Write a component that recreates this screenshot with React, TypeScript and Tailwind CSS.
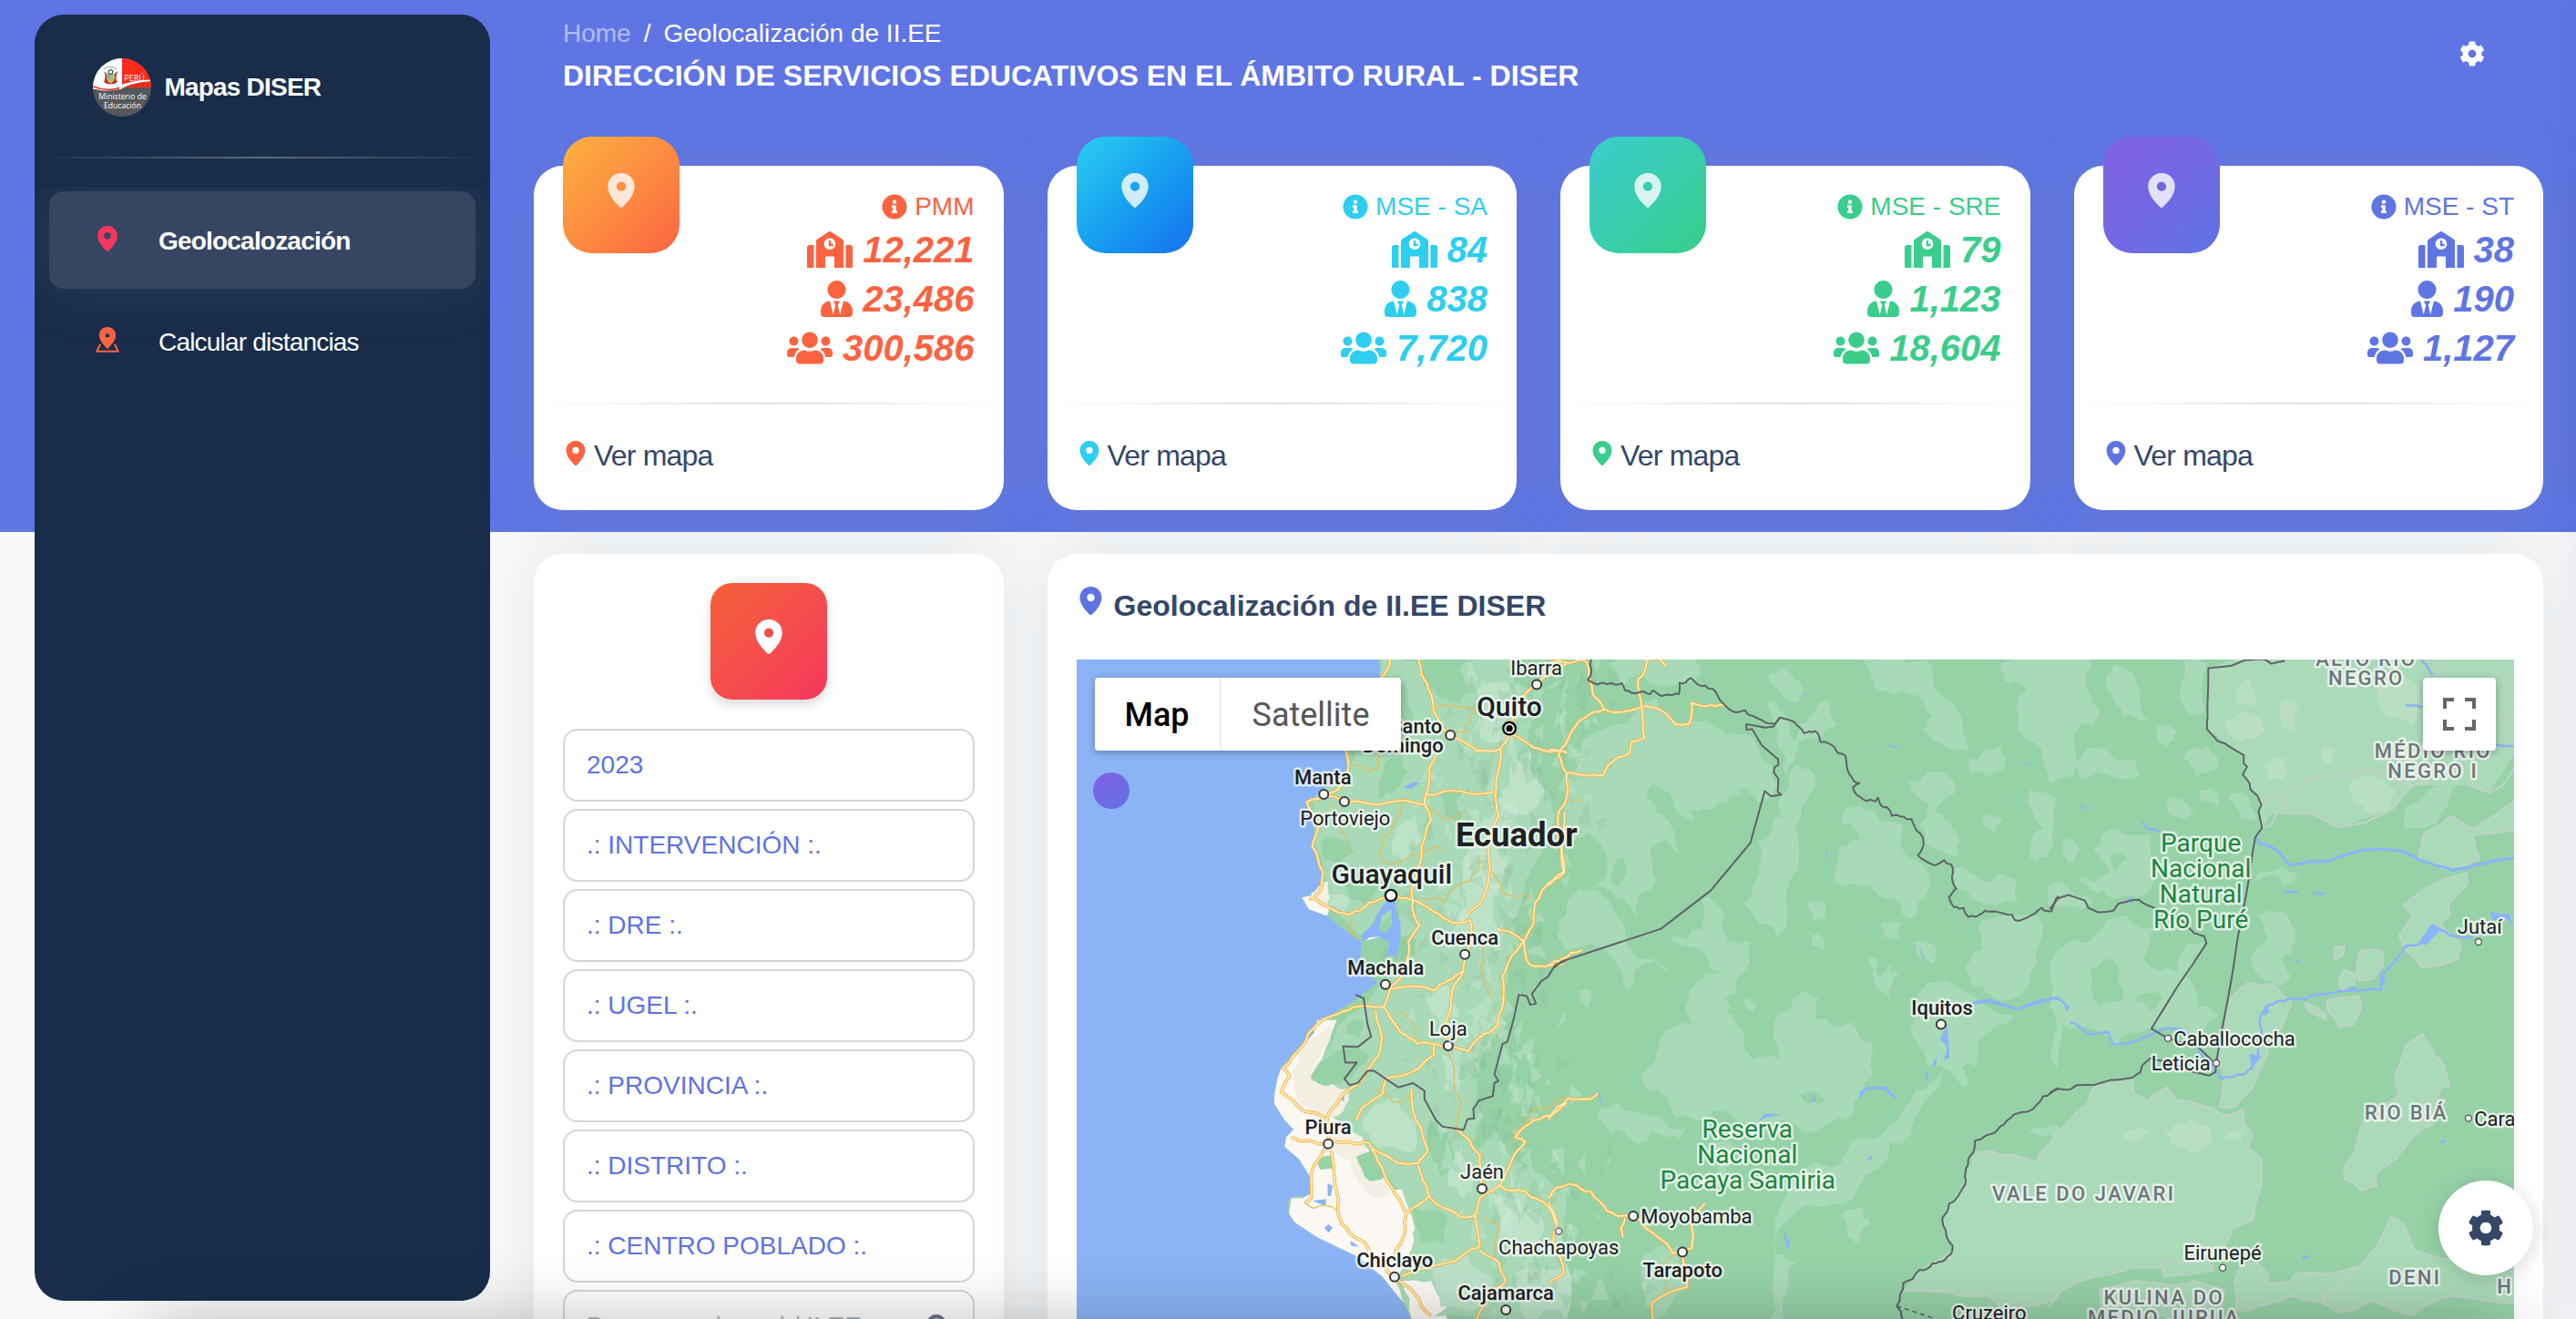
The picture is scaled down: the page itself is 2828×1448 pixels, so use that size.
import React from "react";
import { FaSchool, FaUserTie, FaUsers, FaInfoCircle, FaCog, FaSearch } from "react-icons/fa";

/* ---------- icons ---------- */

function Pin({ className }: { className?: string }) {
  return (
    <svg viewBox="0 0 24 31" fill="currentColor" className={className}>
      <path
        fillRule="evenodd"
        d="M12 0C5.3 0 0 5.2 0 11.9c0 7.6 6.3 14.3 10.7 18.5.8.8 1.8.8 2.6 0C17.700 26.200 24 19.500 24 11.900 24 5.200 18.700 0 12 0zm0 16.200a4.200 4.200 0 1 1 0-8.400 4.200 4.200 0 0 1 0 8.400z"
      />
    </svg>
  );
}

function RoutePin({ className }: { className?: string }) {
  return (
    <svg viewBox="0 0 28 30" className={className}>
      <path
        fill="currentColor"
        fillRule="evenodd"
        d="M14 0C8.700 0 4.200 4 4.200 9.400c0 6.200 5 11.400 8.500 15.300.8.800 1.800.8 2.600 0 3.500-3.900 8.500-9.100 8.500-15.300C23.800 4 19.300 0 14 0zm0 12.400a2.400 2.400 0 1 1 0-4.800 2.400 2.400 0 0 1 0 4.800z"
      />
      <path
        d="M5.200 21 1.400 28.800h25.200L22.800 21"
        fill="none"
        stroke="currentColor"
        strokeWidth="2.200"
        strokeLinecap="round"
        strokeLinejoin="round"
      />
    </svg>
  );
}

function Crest() {
  return (
    <svg viewBox="0 0 64 64" className="size-16 shrink-0">
      <defs>
        <clipPath id="crest">
          <circle cx="32" cy="32" r="32" />
        </clipPath>
      </defs>
      <g clipPath="url(#crest)">
        <rect width="64" height="64" fill="#55585a" />
        <rect width="32" height="34" fill="#fff" />
        <rect x="32" width="32" height="32" fill="#fb2a1c" />
        <path d="M0 28c10 5 20 5.500 30 1.500S50 24 64 23.500V25c-12 1-22 3-30 7s-22 5-34 1z" fill="#fff" />
        <path d="M0 31c10 4 20 4.500 29 1.500" fill="none" stroke="#fb2a1c" strokeWidth="1.400" />
        <path d="M12 11.500q7-4 14 0" fill="none" stroke="#999" strokeWidth="1" />
        <path d="M11 14q3 2 2.500 6T12 26q3 2.500 7.500 2.500T27 26q-2-2-1.500-6t2.500-6q-3 1-4.500 3.500h-8Q14 15 11 14z" fill="#b5332a" />
        <path d="M15 17.500h9v5q-1.500 4-4.500 5-3-1-4.500-5z" fill="#c9b46a" />
        <path d="M15.500 18h4v4.500h-4z" fill="#7fb3b8" />
        <circle cx="19.500" cy="15" r="2.400" fill="none" stroke="#39724d" strokeWidth="1.300" />
        <text x="45.500" y="24.800" fontSize="9" fill="#fff" textAnchor="middle" className="font-['Open_Sans',sans-serif]">PERÚ</text>
        <text x="32.500" y="45.200" fontSize="8.600" fill="#fff" textAnchor="middle" className="font-['Open_Sans',sans-serif]">Ministerio de</text>
        <text x="32.500" y="54.600" fontSize="8.600" fill="#fff" textAnchor="middle" className="font-['Open_Sans',sans-serif]">Educación</text>
      </g>
    </svg>
  );
}

/* ---------- sidebar ---------- */

function Sidebar() {
  return (
    <aside className="mt-4 ml-[38px] flex h-[1412px] w-[500px] shrink-0 flex-col overflow-hidden rounded-[32px] bg-[#192d4b]">
      <div className="flex h-[156px] items-center pl-16 pt-4 pb-3">
        <Crest />
        <span className="ml-[14.500px] text-[28px] leading-10 font-bold tracking-[-0.8px] text-white">Mapas DISER</span>
      </div>
      <div className="h-0.5 bg-[linear-gradient(90deg,transparent,rgba(255,255,255,.3),transparent)]" />
      <nav className="mt-8 flex-1 overflow-hidden px-4 pt-1 text-[28px] tracking-[-0.8px] text-white">
        <a className="flex h-[107px] items-center rounded-2xl bg-[#364662] pl-[53px] font-bold shadow-[0_0_64px_rgba(136,152,170,.15)]">
          <Pin className="-mt-1 h-7 w-[22px] text-[#f5365c]" />
          <span className="ml-[45px] pt-0.5">Geolocalozación</span>
        </a>
        <a className="mt-1 flex h-[107px] items-center pl-[51px]">
          <RoutePin className="-mt-1 h-7 w-[26px] text-[#fb6340]" />
          <span className="ml-[43px] pt-0.5">Calcular distancias</span>
        </a>
      </nav>
    </aside>
  );
}

/* ---------- summary cards ---------- */

type Card = { name: string; text: string; box: string; schools: string; teachers: string; students: string };

const cards: Card[] = [
  { name: "PMM", text: "text-[#fb6340]", box: "from-[#fbb140] to-[#fb6340]", schools: "12,221", teachers: "23,486", students: "300,586" },
  { name: "MSE - SA", text: "text-[#2dceef]", box: "from-[#2dceef] to-[#1a6fee]", schools: "84", teachers: "838", students: "7,720" },
  { name: "MSE - SRE", text: "text-[#3acd8b]", box: "from-[#3acdcd] to-[#3acd8b]", schools: "79", teachers: "1,123", students: "18,604" },
  { name: "MSE - ST", text: "text-[#5f75e3]", box: "from-[#825ee4] to-[#5e72e4]", schools: "38", teachers: "190", students: "1,127" },
];

const cardShadow = "shadow-[0_0_64px_rgba(125,145,145,.17)]";

function StatCard({ card }: { card: Card }) {
  return (
    <section className={`flex h-[378px] flex-col rounded-[32px] bg-white ${cardShadow}`}>
      <div className="flex h-[260px] justify-between px-8">
        <div className={`-mt-8 flex size-32 justify-center rounded-[32px] bg-linear-135 pt-10 ${card.box}`}>
          <Pin className="h-[38px] w-[30px] text-white opacity-80" />
        </div>
        <div className={`flex flex-col items-end pt-[25px] ${card.text}`}>
          <p className="flex h-10 items-center gap-2 text-[28px]">
            <FaInfoCircle className="size-7" />
            {card.name}
          </p>
          <div className="flex flex-col items-end text-[40px] leading-[54px] font-bold italic">
            <p className="flex h-[54px] items-center gap-[11px]">
              <FaSchool className="h-10 w-[50px]" />
              {card.schools}
            </p>
            <p className="flex h-[54px] items-center gap-[11px]">
              <FaUserTie className="h-10 w-[35px]" />
              {card.teachers}
            </p>
            <p className="flex h-[54px] items-center gap-[11px]">
              <FaUsers className="h-10 w-[50px]" />
              {card.students}
            </p>
          </div>
        </div>
      </div>
      <div className="h-0.5 bg-[linear-gradient(90deg,transparent,rgba(0,0,0,.12),transparent)]" />
      <div className="flex items-center pt-8 pl-[35px]">
        <Pin className={`-mt-1.5 h-[27px] w-[22px] ${card.text}`} />
        <span className="ml-[9px] text-[32px] leading-[48px] tracking-[-0.8px] text-[#344767]">Ver mapa</span>
      </div>
    </section>
  );
}

/* ---------- filters ---------- */

const filters = ["2023", ".: INTERVENCIÓN :.", ".: DRE :.", ".: UGEL :.", ".: PROVINCIA :.", ".: DISTRITO :.", ".: CENTRO POBLADO :."];

function Filters() {
  return (
    <section className={`flex h-[1000px] flex-col items-center rounded-[32px] bg-white px-8 pt-8 ${cardShadow}`}>
      <div className="flex size-32 justify-center rounded-3xl bg-linear-135 from-[#f56036] to-[#f5365c] pt-10 shadow-[0_6px_12px_rgba(0,0,0,.14)]">
        <Pin className="h-[38px] w-[30px] text-white" />
      </div>
      <div className="mt-8 flex w-full flex-col gap-2 text-[28px] text-[#5e72e4]">
        {filters.map((f) => (
          <div key={f} className="flex h-20 items-center rounded-2xl border-2 border-[#d2d6da] px-6">
            {f}
          </div>
        ))}
        <div className="flex h-20 items-center justify-between rounded-2xl border-2 border-[#d2d6da] px-6 text-[#adb5bd]">
          <span>Buscar: cod_mod / II.EE</span>
          <FaSearch className="size-[27px] text-[#67748e]" />
        </div>
      </div>
    </section>
  );
}

/* ---------- map ---------- */

function makeRandom(seed: number) {
  let s = seed;
  return () => {
    s = (s * 16807) % 2147483647;
    return s / 2147483647;
  };
}

/* Turns a coarse outline into an irregular one by displacing edge midpoints. */
function rough(src: string, closed: boolean, amount = 0.14, depth = 2): string {
  let pts = src
    .trim()
    .split(/\s+/)
    .map((p) => p.split(",").map(Number));
  const rnd = makeRandom(Math.round(Math.abs(pts[0][0] * 31 + pts[0][1] * 17)) + 7);
  for (let d = 0; d < depth; d++) {
    const out: number[][] = [];
    pts.forEach((p, i) => {
      out.push(p);
      if (!closed && i === pts.length - 1) return;
      const q = pts[(i + 1) % pts.length];
      const dx = q[0] - p[0];
      const dy = q[1] - p[1];
      if (Math.hypot(dx, dy) < 14) return;
      const k = (rnd() - 0.5) * 2 * amount;
      out.push([(p[0] + q[0]) / 2 - dy * k, (p[1] + q[1]) / 2 + dx * k]);
    });
    pts = out;
  }
  return "M" + pts.map((p) => p[0].toFixed(1) + " " + p[1].toFixed(1)).join("L") + (closed ? "Z" : "");
}

const FOREST = "#97d2a7";
const GREEN = "#a9dab8";
const PALE = "#bce2c8";
const WATER = "#8bb4f6";
const SAND = "#f3efe3";
const PLAIN = "#fbf8f3";

const WEST = "translate(1160 700) scale(.35714 .47703)";
const CENTER = "translate(1700 700) scale(.35714 .47703)";
const EAST = "translate(2250 700) scale(.36862 .47703)";

const coast =
  "M985 40L998 72L995 95L960 180L900 250L890 262L897 290L885 335L850 350L820 358L768 378L775 400L805 430L800 455L783 480L800 500L815 540L810 575L800 590L775 602L753 598L775 625L830 640L870 665L935 698L935 710L932 750L960 775L985 795L940 820L915 835L870 855L830 875L800 890L790 910L750 945L690 990L680 1010L670 1045L668 1072L700 1110L728 1132L705 1150L700 1172L745 1200L765 1220L782 1245L780 1280L775 1290L755 1285L732 1286L712 1295L710 1325L730 1345L800 1380L880 1405L925 1425L960 1445L1000 1470L1030 1500L1070 1535L1095 1580L4700 1580L4700 40Z";

const westGreen = [
  "1000,50 1100,55 1180,120 1250,60 1420,50 1400,110 1480,120 1568,90 1568,250 1500,300 1530,420 1440,560 1400,660 1430,720 1380,800 1360,900 1300,980 1290,1080 1400,1200 1500,1240 1568,1300 1568,1568 1100,1568 1040,1480 1100,1380 1060,1280 960,1180 880,1120 800,1090 780,1010 860,900 940,850 1010,790 1060,720 1050,620 940,690 830,610 820,540 790,470 790,370 900,300",
];
const westForest = [
  "1120,60 1200,60 1260,110 1240,150 1180,140 1130,110",
  "1020,90 1080,130 1090,200 1010,190",
  "1010,290 1060,270 1080,310 1040,350 990,370 1000,320",
  "810,470 900,470 920,500 870,520 820,510",
  "880,560 930,540 1000,560 960,610 900,600",
  "1180,360 1240,350 1260,400 1230,430 1190,400",
  "1400,700 1470,740 1440,800 1390,800 1380,750",
  "890,890 940,880 930,920 890,915",
  "1060,690 1090,680 1090,760 1060,770",
  "1300,1060 1340,1080 1320,1160 1270,1180",
  "1150,1110 1210,1160 1230,1230 1180,1240 1150,1190",
  "780,1010 860,950 960,960 900,1020 800,1025",
  "1100,1310 1200,1330 1190,1400 1120,1390",
  "1450,170 1568,80 1568,330 1500,350 1460,270",
];
const westPale = [
  "1290,120 1380,100 1420,150 1390,240 1300,230",
  "1400,280 1470,260 1500,330 1460,400 1380,430 1340,480 1300,430 1350,380",
  "1270,480 1350,450 1380,520 1340,600 1360,680 1290,700 1220,690 1260,620",
  "840,590 900,600 880,640 830,620",
  "1040,440 1100,410 1120,470 1070,520 1030,500",
  "960,1090 1050,1060 1110,1110 1100,1180 1010,1170 940,1130",
  "1130,830 1200,800 1240,870 1180,890",
  "1180,960 1240,990 1230,1060 1190,1040",
  "1230,1180 1290,1240 1250,1290 1200,1260",
  "1340,1280 1440,1300 1500,1360 1440,1420 1350,1400",
  "1130,1440 1260,1420 1340,1470 1300,1540 1180,1540",
  "1410,1460 1568,1440 1568,1568 1440,1568",
];
const sand = ["850,880 830,940 780,1020 900,1040 880,1090 800,1110 735,1060 720,1000 760,945", "840,1120 940,1150 1010,1240 1075,1320 1060,1380 990,1360 900,1230 850,1180", "780,590 835,560 840,600 815,625"];

const majorWest = [
  "1025,50 1015,75 995,95",
  "888,260 897,290 885,335 850,355 820,363",
  "1113,50 1120,85 1150,130 1158,170 1210,224 1240,235 1290,260 1340,262 1365,255 1390,220",
  "1365,258 1360,300 1350,350 1358,410 1325,480 1330,540 1310,600 1260,640",
  "820,363 880,375 960,382 1060,375 1130,385 1135,360 1210,352 1250,355 1340,355",
  "1165,270 1145,300 1130,380 1150,420 1120,480 1110,530 1090,580 1095,630 1115,660 1080,700 1075,760 1030,800 1005,850 1030,880 1060,910 1110,935 1160,935 1203,939",
  "775,600 830,618 900,637 960,610 1027,593 1090,603 1140,620 1200,650 1270,650 1280,690 1254,729",
  "850,355 768,378 790,410 810,430 785,480 818,540 812,580 790,600",
  "1254,729 1250,765 1200,790 1160,812 1030,808",
  "1250,765 1215,810 1210,860 1190,900 1203,939",
  "1203,939 1265,952 1300,920 1355,890 1370,850 1370,780 1400,730 1435,698 1465,660 1470,610 1500,575 1560,540 1550,480 1560,400",
  "1355,670 1400,680 1435,698 1450,750 1500,757 1568,742",
  "1005,850 940,847 880,860 800,890 755,940 695,990 715,1010 690,1045 760,1090 830,1110 870,1060 920,1030 970,980 995,945 980,860",
  "830,1110 834,1165 720,1150",
  "834,1165 900,1160 960,1163 1000,1220 1040,1280 1075,1325 1070,1370 1038,1420",
  "834,1165 790,1215 782,1290 765,1300",
  "843,1180 855,1260 865,1325 900,1370 950,1395 1000,1440 1038,1471",
  "970,1175 1050,1210 1110,1210 1140,1180 1120,1130 1095,1090 1090,1040",
  "1110,1215 1125,1250 1145,1285 1240,1333 1285,1330 1300,1290 1360,1260 1440,1275 1510,1310 1535,1350",
  "1145,1285 1075,1325",
  "1225,1130 1270,1160 1300,1190 1305,1260",
  "1360,1265 1400,1200 1440,1160 1410,1150 1450,1120 1520,1100 1568,1070",
  "1285,1330 1300,1400 1250,1420 1190,1440 1060,1470",
  "1038,1471 1100,1510 1150,1560",
  "1300,1410 1360,1440 1380,1480 1340,1500 1290,1568",
  "920,1110 940,1080 1000,1050 1010,1015 1090,1000 1160,960 1160,935",
  "1390,220 1430,235 1500,260 1568,265",
  "1391,209 1440,130 1475,108 1568,60",
];
const minorWest = [
  "1165,165 1240,160 1285,170 1250,220 1215,224",
  "890,290 960,310 990,300 985,250",
  "1060,380 1000,460 1010,520 1090,500 1190,490",
  "830,380 870,440 900,500",
  "900,637 900,680 930,695",
  "1115,600 1190,610 1270,560 1300,500",
  "1340,540 1380,590 1460,600",
  "1203,939 1220,1010 1225,1130",
  "980,1040 1050,1070 1090,1050",
  "1050,860 1090,880 1110,930",
  "1310,690 1310,780 1340,830",
  "1400,1160 1480,1080 1568,1060",
  "1130,385 1190,420 1250,400",
  "760,1300 870,1325",
  "1310,1330 1360,1360 1340,1420",
];
const majorCenter = [
  "0,60 60,58 115,55 125,95 135,130 170,165 285,160 340,165 390,200 430,200 440,150 500,155 545,157",
  "300,50 290,85 275,95 285,160 295,230 255,240 250,265 180,295 165,318 100,315 55,312 30,270 70,215 110,185 170,165",
  "55,312 50,380 28,410 45,540 0,570",
  "0,755 40,740 103,718",
  "0,258 30,262",
  "300,52 340,50 362,65",
  "0,1108 60,1060 125,1062 150,1048",
  "0,1290 25,1265 70,1258 130,1275 180,1320 215,1332 260,1331 300,1360 380,1415 411,1414 440,1405 438,1340 480,1302",
  "235,1335 222,1360 228,1380",
  "0,1300 25,1345 15,1400 48,1460 0,1485",
  "411,1414 425,1495 318,1530 320,1568",
];

const westBorder =
  "918,822 943,830 955,890 966,918 925,942 880,940 887,978 922,978 884,1015 900,1030 925,1025 955,997 975,997 1010,1015 1050,1035 1095,1025 1130,1043 1130,1062 1165,1110 1185,1125 1250,1133 1262,1108 1283,1107 1280,1085 1298,1065 1340,1055 1345,1025 1357,1020 1345,1005 1370,935 1385,930 1405,875 1420,822 1445,825 1455,845 1473,842 1460,820 1490,790 1510,780 1530,755 1568,742";
const centerBorders = [
  "15,760 40,745 345,670 498,582 620,472 664,353 683,365 715,361 704,355 706,325 692,310 694,298 706,293 705,280 655,248 625,210 608,212 607,199 665,207 690,205 710,184",
  "130,50 120,97 180,107 225,105 235,122 270,128 312,130 320,121 358,132 400,130 402,104 422,103 436,93 450,102 480,110 505,118 520,135 555,165 603,167 655,190 695,198 710,184 765,203 785,220 818,215 835,240 865,245 885,262 912,272 925,315 955,335 935,345 947,362 1005,377 1012,368 1020,385 1040,390 1055,410 1082,412 1115,417 1132,445 1150,460 1152,478 1135,500 1160,515 1190,523 1215,512 1237,522 1241,560 1253,578 1230,597 1245,620 1275,622 1290,643 1325,637 1360,630 1425,638 1433,650 1480,640 1515,622 1545,630 1568,595",
  "1568,1038 1545,1045 1500,1075 1440,1095 1400,1120 1370,1140 1345,1145 1310,1158 1305,1185 1282,1222 1280,1258 1230,1303 1210,1335 1212,1352 1242,1400 1240,1412 1218,1432 1180,1440 1140,1455 1090,1485 1070,1538 1088,1568",
];
const eastBorders = [
  "0,1050 20,1038 60,1040 80,1030 130,1030 180,1018 245,1013 270,1000 275,985 300,968 340,975 430,1000 475,1008 493,1000 496,985 496,978 560,690 605,490 612,460 632,438 622,400 630,385 620,365 598,350 595,335 575,315 588,297 578,290 578,270 520,243 500,238 468,210 470,180 472,70 500,68 540,65 580,52 640,50 660,60 700,54",
  "0,625 25,600 55,592 105,605 115,622 145,632 190,628 205,612 240,605 265,603 280,612 320,625 400,655 430,680 460,687 467,703 303,900 352,922 440,940 485,975",
];

const centerGreen = [
  "60,330 200,200 330,140 420,200 500,200 560,220 640,250 690,300 700,340 640,380 600,345 520,380 440,420 380,370 330,340 300,350 330,400 390,470 400,500 340,470 310,490 330,560 270,650 210,600 130,580 180,530 120,450 60,480 50,400",
  "760,290 820,330 790,380 760,440 740,560 700,690 630,640 600,610 650,520 640,470 700,390",
  "910,390 1000,400 1090,430 1080,470 1170,545 1130,640 1060,600 960,570 880,560 900,480 960,470 905,430",
  "430,830 470,790 540,770 490,740 370,690 470,670 470,600 540,640 550,700 620,700 610,760 580,820 545,860 600,910 625,970 705,970 690,910 730,860 780,815 830,830 820,880 930,885 990,930 1000,1000 950,1060 930,1100 850,1120 720,1110 600,1115 480,1110 390,1105 350,1050 285,1010 330,960 340,930 440,890",
  "950,50 1160,50 1200,130 1290,260 1200,240 1130,210 1180,180 1110,130 1010,120 990,80",
  "180,60 260,50 450,50 470,80 340,110 230,110",
  "680,80 740,80 780,110 760,150 690,110",
  "670,150 700,150 740,200 750,290 730,320 700,240",
  "830,150 860,150 885,200 840,230 760,260 770,200",
  "1110,330 1220,310 1245,360 1190,400 1240,440 1260,500 1200,490 1140,430 1165,380",
  "1250,530 1330,560 1440,560 1450,610 1300,600 1250,570",
  "1320,660 1400,640 1520,660 1500,750 1430,830 1350,820 1280,760 1330,720",
  "1200,790 1300,820 1430,870 1330,920 1320,980 1270,990 1290,1030 1240,1000 1160,980 1110,900",
  "60,600 130,580 200,630 320,740 370,770 270,760 240,810 200,740 50,720 30,650",
  "160,1080 260,1090 420,1130 370,1150 270,1165 190,1140 150,1110",
  "1210,1000 1140,1090 1050,1160 950,1270 850,1310 740,1340 700,1420 770,1430 720,1568 680,1568 690,1480 720,1300 870,1220 930,1160 1050,1120 1130,1040",
  "900,1330 960,1310 990,1350 950,1395 920,1380",
  "790,615 850,615 850,650 820,655",
  "1020,660 1085,655 1080,695 1030,690",
  "800,675 850,700 840,720 810,710",
  "985,735 1010,740 1020,780 1040,750 1075,775 1045,830 1000,790",
  "1340,410 1395,420 1370,450 1335,430",
  "1390,60 1568,50 1568,260 1490,240 1440,210 1470,120 1400,100",
  "1290,280 1390,250 1400,300 1350,320 1300,310",
  "1480,350 1560,370 1550,480 1500,520 1480,490 1520,440",
  "1120,700 1190,710 1180,750 1140,740",
  "95,810 135,820 125,850 95,835",
  "580,825 640,850 630,865 590,850",
  "1475,1135 1568,1125 1568,1150 1510,1150",
  "290,1420 400,1400 430,1500 320,1568 290,1500",
  "500,1170 560,1160 540,1240 510,1260",
  "1550,860 1568,850 1568,1000 1550,940",
];
const centerForest = [
  "200,520 230,505 240,540 215,575 190,560",
  "430,400 480,410 520,450 470,440",
  "580,350 620,345 610,370",
  "640,385 700,370 720,420 670,430",
  "770,1050 820,1045 850,1060 800,1072",
  "970,580 1010,590 1000,620",
  "540,830 590,820 640,870 590,890",
];
const eastGreen = [
  "0,50 120,50 110,120 150,180 90,200 70,320 0,335",
  "190,60 270,130 290,190 220,180 170,120",
  "400,50 470,60 465,170 400,160",
  "320,205 380,215 350,250 320,230",
  "80,290 250,280 270,320 190,320 90,325",
  "400,280 470,250 500,300 440,320",
  "450,350 505,360 500,390 450,380",
  "530,370 580,360 620,420 570,420",
  "350,370 430,400 400,420 350,400",
  "0,770 60,700 130,690 230,640 330,660 460,700 410,780 440,850 500,870 450,920 300,900 200,940 60,900 0,850",
  "130,490 200,440 300,450 310,560 200,600 120,580 80,560 180,540",
  "640,540 740,540 700,570 600,560",
  "620,640 690,630 730,700 690,740 720,780 640,790 600,740 650,690",
  "40,460 90,490 70,515 40,500",
  "0,570 60,580 130,610 60,620 0,620",
  "1060,390 1200,340 1170,400 1060,440",
];
const eastForest = ["120,760 200,750 220,830 150,850", "300,680 420,700 380,770 280,740", "180,500 230,510 200,540", "250,830 340,830 300,860"];
const territories = [
  "0,1165 60,1110 110,1075 135,1030 245,1013 250,1050 290,1068 350,1035 380,1065 450,1075 520,1100 575,1085 580,1120 605,1145 590,1175 630,1200 632,1255 605,1340 545,1360 520,1400 400,1440 250,1450 140,1470 40,1500 0,1540",
  "1060,940 1110,912 1145,960 1175,985 1190,1032 1165,1035 1140,1120 1080,1150 1030,1200 970,1235 975,1262 930,1273 878,1245 878,1218 910,1180 930,1120 1005,1070 1040,1055 1030,1005",
  "1018,1332 1055,1350 1085,1410 1180,1430 1240,1430 1400,1450 1400,1530 1290,1525 1200,1515 1140,1530 1080,1560 960,1525 860,1555 810,1530 870,1480 920,1450 980,1395",
  "550,1480 570,1445 620,1440 650,1465 650,1485 720,1480 730,1465 830,1465 915,1448 870,1490 800,1530 720,1515 640,1535 590,1550 555,1545",
  "540,830 590,795 665,797 720,840 690,900 640,920 650,960 600,1040 550,1080 505,1080 520,1010 500,960 525,880",
  "915,750 925,720 990,722 992,755 965,785 920,790",
  "860,790 875,765 912,775 905,805 870,810",
  "825,835 920,825 928,855 905,890 865,897 830,860",
  "845,715 878,710 875,730 850,742",
  "760,840 820,865 822,878 765,855",
  "1055,615 1115,580 1240,542 1245,568 1190,610 1190,640 1165,660 1225,705 1215,740 1110,760 1060,720 1040,685 1080,640",
  "1100,510 1115,450 1195,410 1260,440 1340,400 1400,370 1400,440 1260,455 1278,510 1190,535",
  "160,1568 150,1500 250,1480 380,1490 430,1480 520,1500 500,1568",
  "330,1440 480,1435 490,1455 340,1470",
];
const eastPale = [
  "640,300 670,275 700,280 690,330 650,330",
  "520,190 620,180 640,210 570,240",
  "890,340 960,320 1030,350 1010,400 940,400",
  "690,150 740,155 735,215 690,200",
  "810,250 850,260 840,300 815,290",
  "560,120 600,95 620,140 560,150",
  "340,1140 420,1110 480,1130 470,1165 400,1175",
  "215,1150 260,1130 295,1140 240,1165",
  "520,1150 580,1135 570,1165",
  "960,80 1100,110 1080,200 1000,180",
];

type Label = { t: string; x: number; y: number; s?: number; w?: number; a?: "start" | "middle" | "end"; c?: string; ls?: number };
const PARK = "#1e8540";
const AREA = "#70757a";
const labels: Label[] = [
  { t: "Ibarra", x: 1686.4, y: 741 },
  { t: "Quito", x: 1656.8, y: 785.5, s: 30, w: 500 },
  { t: "Santo", x: 1583, y: 804.5, w: 500, a: "end" },
  { t: "Domingo", x: 1584.5, y: 826, w: 500, a: "end" },
  { t: "Manta", x: 1452, y: 861, w: 500 },
  { t: "Portoviejo", x: 1476.6, y: 906 },
  { t: "Ecuador", x: 1664.5, y: 929, s: 36.5, w: 700 },
  { t: "Guayaquil", x: 1527.5, y: 969.5, s: 30, w: 500 },
  { t: "Cuenca", x: 1607.9, y: 1036.8, w: 500 },
  { t: "Machala", x: 1521, y: 1069.7, w: 500 },
  { t: "Loja", x: 1589.6, y: 1137 },
  { t: "Piura", x: 1457.9, y: 1244.8, w: 500 },
  { t: "Jaén", x: 1626.8, y: 1294 },
  { t: "Chiclayo", x: 1531, y: 1391, w: 500 },
  { t: "Cajamarca", x: 1652.9, y: 1427, w: 500 },
  { t: "Chachapoyas", x: 1711, y: 1377 },
  { t: "Iquitos", x: 2131.8, y: 1114, w: 500 },
  { t: "Moyobamba", x: 1801, y: 1343, a: "start" },
  { t: "Tarapoto", x: 1847, y: 1401.7, w: 500 },
  { t: "Reserva", x: 1918, y: 1249, s: 28, c: PARK },
  { t: "Nacional", x: 1918, y: 1277, s: 28, c: PARK },
  { t: "Pacaya Samiria", x: 1918.5, y: 1305, s: 28, c: PARK },
  { t: "VALE DO JAVARI", x: 2287.5, y: 1318, w: 500, c: AREA, ls: 2.5 },
  { t: "Cruzeiro", x: 2183.6, y: 1449 },
  { t: "ALTO RÍO", x: 2597.5, y: 730.5, w: 500, c: AREA, ls: 2.3 },
  { t: "NEGRO", x: 2597.5, y: 751.5, w: 500, c: AREA, ls: 2.3 },
  { t: "MÉDIO RIO", x: 2671, y: 831.5, w: 500, c: AREA, ls: 2.3 },
  { t: "NEGRO I", x: 2671, y: 853.5, w: 500, c: AREA, ls: 2.3 },
  { t: "Parque", x: 2415.9, y: 935, s: 28, c: PARK },
  { t: "Nacional", x: 2415.9, y: 963, s: 28, c: PARK },
  { t: "Natural", x: 2415.9, y: 991, s: 28, c: PARK },
  { t: "Río Puré", x: 2415.9, y: 1019, s: 28, c: PARK },
  { t: "Jutaí", x: 2722, y: 1025 },
  { t: "Caballococha", x: 2386, y: 1148, a: "start" },
  { t: "Leticia", x: 2394, y: 1175 },
  { t: "RIO BIÁ", x: 2641.5, y: 1228.5, w: 500, c: AREA, ls: 2.3 },
  { t: "Cara", x: 2716, y: 1235.7, a: "start" },
  { t: "DENI", x: 2651, y: 1409.5, w: 500, c: AREA, ls: 2.3 },
  { t: "H", x: 2741, y: 1420, w: 500, a: "start", c: AREA, ls: 2.3 },
  { t: "Eirunepé", x: 2439.8, y: 1383 },
  { t: "KULINA DO", x: 2375.5, y: 1432, w: 500, c: AREA, ls: 2.3 },
  { t: "MEDIO JURUA", x: 2375.5, y: 1454, w: 500, c: AREA, ls: 2.3 },
];

const towns: [number, number, number][] = [
  [1686.8, 751.5, 5], [1592, 807, 5], [1453, 872, 5], [1475.7, 880, 5], [1607.9, 1047.8, 5],
  [1520.7, 1080.7, 5], [1589.6, 1148, 5], [1457.9, 1255.7, 5], [1626.8, 1305, 5], [1530.7, 1401.7, 5],
  [1652.9, 1438, 5], [1711, 1351.6, 3.5], [2130.7, 1124.6, 5], [1792.9, 1335, 5], [1846.8, 1374.5, 5],
  [2720.7, 1034, 3.5], [2379.8, 1139.8, 3.5], [2432.8, 1167, 3.5], [2709.7, 1227.6, 3.5], [2439.8, 1391.7, 3.5],
];

/* Small facets that suggest relief along the Andes. */
const relief = (() => {
  const rnd = makeRandom(4242);
  const out: { d: string; light: boolean }[] = [];
  for (let i = 0; i < 380; i++) {
    const v = rnd();
    const y = 724 + v * 724;
    const axis = v < 0.45 ? 1690 - v * 170 : 1613 + (v - 0.45) * 190;
    const x = axis + (rnd() + rnd() - 1) * 115;
    const r = 5 + rnd() * 13;
    const a = rnd() * 6;
    const p = [0, 1, 2].map((k) => {
      const t = a + k * 2 + rnd();
      const q = r * (0.4 + rnd() * 0.8);
      return `${(x + Math.cos(t) * q * 0.7).toFixed(1)} ${(y + Math.sin(t) * q * 1.2).toFixed(1)}`;
    });
    out.push({ d: "M" + p.join("L") + "Z", light: rnd() > 0.5 });
  }
  return out;
})();

function Shapes({ list, fill, amount }: { list: string[]; fill: string; amount?: number }) {
  return (
    <>
      {list.map((s) => (
        <path key={s} d={rough(s, true, amount)} fill={fill} />
      ))}
    </>
  );
}

function Lines({ list, stroke, width, amount = 0.1 }: { list: string[]; stroke: string; width: number; amount?: number }) {
  return (
    <>
      {list.map((s) => (
        <path
          key={s}
          d={rough(s, false, amount)}
          fill="none"
          stroke={stroke}
          strokeWidth={width}
          strokeLinejoin="round"
          vectorEffect="non-scaling-stroke"
        />
      ))}
    </>
  );
}

function MapCanvas() {
  return (
    <svg viewBox="1182 724 1578 724" className="block h-[724px] w-full bg-[#8bb4f6] font-[Roboto,sans-serif]">
      <g transform={WEST}>
        <path d={coast} fill={FOREST} />
        <path d="M800 880L790 910L750 945L690 990L680 1010L670 1045L668 1072L700 1110L728 1132L705 1150L700 1172L745 1200L782 1245L780 1280L755 1290L720 1290L714 1325L730 1345L800 1380L925 1425L1000 1470L1070 1535L1095 1568L1200 1568L1170 1500L1060 1460L1100 1390L1075 1320L1010 1250L960 1180L960 1140L880 1110L900 1040L790 1020L860 880Z" fill={PLAIN} />
        <path d="M753 598L800 590L840 560L840 620L830 640L775 625Z" fill={PLAIN} />
        <Shapes list={westGreen} fill={GREEN} amount={0.08} />
        <Shapes list={sand} fill={SAND} />
        <Shapes list={["1060,1270 1100,1360 1050,1440 1010,1450 960,1400 880,1280 850,1180 900,1200 980,1290", "1060,1480 1150,1480 1200,1540 1150,1568 1090,1568"]} fill={PLAIN} />
        <Shapes list={["920,1195 980,1180 1010,1240 960,1250", "800,1200 845,1190 850,1225 810,1225"]} fill={FOREST} />
        <Shapes list={westPale} fill={PALE} amount={0.2} />
        <Shapes list={westForest} fill={FOREST} amount={0.22} />
      </g>
      <g transform={CENTER}>
        <Shapes list={centerGreen} fill={GREEN} amount={0.24} />
        <Shapes list={centerForest} fill={FOREST} amount={0.2} />
        <path d="M1310 1185L1365 1182L1380 1190L1430 1190L1500 1207L1515 1180L1568 1150L1568 1520L1500 1540L1400 1545L1350 1515L1270 1515L1220 1505L1090 1503L1140 1455L1240 1410L1210 1340L1282 1240Z" fill="#abdab9" />
        <path d="M1310 1185L1365 1182L1380 1190L1430 1190L1500 1207L1515 1180L1568 1150M1568 1520L1530 1530L1400 1545L1350 1515L1270 1515L1220 1505L1090 1503" fill="none" stroke="#c3d1c8" strokeWidth="2" vectorEffect="non-scaling-stroke" />
      </g>
      <g transform={EAST}>
        <Shapes list={eastGreen} fill={GREEN} amount={0.22} />
        <Shapes list={eastForest} fill={FOREST} amount={0.2} />
        <path d="M472 70L580 40L1400 40L1400 250L1310 355L1250 340L1080 340L1020 395L860 437L780 405L660 405L632 438L620 365L575 315L578 270L468 210Z" fill="#abdab9" />
        <path d="M630 380L785 322L900 315L940 303L1080 340M680 360L715 405M632 438L660 432L675 405L780 405L860 437L940 425L1020 395L1080 340L1150 330M1384 180L1330 178M1384 60L1350 90L1360 130L1384 148M1150 90L1180 50M1250 340L1310 357L1350 340L1384 300" fill="none" stroke="#c3d1c8" strokeWidth="2" vectorEffect="non-scaling-stroke" />
        {territories.map((s, i) => (
          <path key={s} d={rough(s, i !== 0, 0.06, 1)} fill="#abdab9" stroke="#c0d2c7" strokeWidth="2" strokeLinejoin="round" vectorEffect="non-scaling-stroke" />
        ))}
        <Shapes list={eastPale} fill="#b9dfc3" amount={0.22} />
      </g>

      {relief.map((f) => (
        <path key={f.d} d={f.d} fill={f.light ? "#d3ecd9" : "#7fb892"} opacity={f.light ? 0.32 : 0.22} />
      ))}

      {/* rivers and lagoons */}
      <g transform={WEST} fill={WATER}>
        <path d="M1018 600L1040 605L1045 635L1057 660L1055 700L1045 735L1015 730L1022 700L990 690L935 698L935 685L970 660L985 635ZM990 670L1012 680L1030 655L1028 625L1000 640ZM1065 345L1095 332L1115 335L1090 348ZM832 1255L848 1262L842 1285L833 1285ZM785 1296L828 1292L826 1308ZM822 1358L835 1350L848 1358L835 1370ZM902 1388L930 1402L905 1400ZM870 1060L885 1045L882 1068Z" fillRule="evenodd" />
        <path d="M960 690L995 688L950 697Z" fill="#fff" />
      </g>
      <g transform={CENTER} fill={WATER}>
        <path d="M1300 838L1350 830L1400 842L1440 852L1500 835L1568 825L1568 829L1500 845L1440 858L1400 850L1350 840L1300 845ZM1225 890L1232 965L1215 975L1225 940L1202 925ZM1195 960L1190 985L1175 990ZM1160 995L1168 1010L1158 1022ZM955 1045L980 1033L1035 1033L1072 1060L1060 1062L1030 1040L975 1040L958 1062ZM640 1115L665 1095L720 1098L665 1105ZM720 1363L740 1390L738 1410L728 1395ZM975 1200L995 1192L990 1203ZM150 1040L170 1075L155 1062ZM845 515L858 482L856 500ZM1140 705L1150 730L1168 745L1145 732ZM1030 244L1085 252L1065 254ZM1455 295L1490 282L1480 290ZM765 125L810 133L785 131ZM805 1070L822 1048L818 1068Z" />
      </g>
      <g transform={EAST}>
        <Lines
          list={["615,460 625,472 680,490 715,524 830,515 880,500 950,488 1040,490 1100,512 1200,535 1290,520 1384,508"]}
          stroke={WATER}
          width={3.2}
          amount={0.04}
        />
        <Lines
          list={[
            "60,885 110,912 175,908 190,935 270,925 300,915 390,900 430,920 490,990 510,1015 580,1005 620,970 620,950 632,920 625,880 650,845 710,832 760,832 830,820 900,812 985,812 990,775 1060,710 1110,700 1140,663 1190,685 1250,690 1310,680",
            "0,828 45,842",
            "275,425 290,440 380,455",
            "1384,250 1330,245",
            "1060,155 1110,160",
            "1105,50 1140,85",
            "700,585 740,587",
            "785,588 820,590",
          ]}
          stroke={WATER}
          width={2.6}
        />
        <path d="M1310 632L1370 636L1377 670L1365 650L1320 650ZM1100 700L1140 658L1165 672L1120 708ZM595 958L632 962L600 990ZM985 765L1000 790L985 812ZM40 840L60 848L50 862ZM640 845L655 860L638 872ZM730 745L740 738L750 748ZM1158 1160L1178 1155L1175 1165ZM750 1425L780 1420L755 1432ZM225 605L245 597L245 612ZM90 382L110 392L98 395ZM885 805L910 802L905 815Z" fill={WATER} />
      </g>

      {/* roads */}
      <g transform={WEST}>
        <Lines list={minorWest} stroke="#e3bd5c" width={1.3} amount={0.2} />
        <Lines list={majorWest} stroke="#f2b440" width={3.6} />
      </g>
      <g transform={CENTER}>
        <Lines list={majorCenter} stroke="#f2b440" width={3.6} />
        <Lines list={["55,378 110,378", "360,1520 365,1430 390,1415"]} stroke="#e3bd5c" width={1.3} />
      </g>
      <g transform={WEST}>
        <Lines list={majorWest} stroke="#fdebbd" width={1.8} />
      </g>
      <g transform={CENTER}>
        <Lines list={majorCenter} stroke="#fdebbd" width={1.8} />
      </g>

      {/* borders */}
      <g transform={WEST}>
        <Lines list={[westBorder]} stroke="#5f6368" width={2} amount={0} />
      </g>
      <g transform={CENTER}>
        <Lines list={[centerBorders[0]]} stroke="#5f6368" width={2} amount={0} />
        <Lines list={centerBorders.slice(1)} stroke="#5f6368" width={2} amount={0.15} />
        <path d="M1070 1538L1190 1568" fill="none" stroke="#5f6368" strokeWidth="1.5" strokeDasharray="5 4" vectorEffect="non-scaling-stroke" />
      </g>
      <g transform={EAST}>
        <Lines list={eastBorders} stroke="#5f6368" width={2} amount={0.02} />
      </g>

      {/* towns */}
      {towns.map(([x, y, r]) => (
        <circle key={x + "," + y} cx={x} cy={y} r={r} fill="#f6f6f6" stroke={r < 4 ? "#555" : "#3c3c3c"} strokeWidth={r < 4 ? 1.3 : 2} />
      ))}
      <circle cx="1526.800" cy="983" r="6.200" fill="#fff" stroke="#111" strokeWidth="2.200" />
      <circle cx="1656.800" cy="799.700" r="6.800" fill="#e8efe6" stroke="#000" strokeWidth="2.200" />
      <circle cx="1656.800" cy="799.700" r="3.600" fill="#000" />

      {labels.map((l) => (
        <text
          key={l.t + l.x + l.y}
          x={l.x}
          y={l.y}
          fontSize={l.s ?? 22}
          fontWeight={l.w ?? 400}
          textAnchor={l.a ?? "middle"}
          letterSpacing={l.ls ?? 0}
          fill={l.c ?? "#202124"}
          stroke="#fff"
          strokeOpacity="0.7"
          strokeWidth="5"
          strokeLinejoin="round"
          paintOrder="stroke"
        >
          {l.t}
        </text>
      ))}
    </svg>
  );
}

function MapCard() {
  return (
    <section className={`col-span-3 h-[1000px] rounded-[32px] bg-white px-8 ${cardShadow}`}>
      <h2 className="flex h-[116px] items-center pb-[3px] text-[32px] font-bold text-[#344767]">
        <Pin className="mt-[-10px] ml-[3px] h-[31px] w-[25px] text-[#5e72e4]" />
        <span className="ml-[13px]">Geolocalización de II.EE DISER</span>
      </h2>
      <div className="relative h-[724px] overflow-hidden">
        <MapCanvas />
        <div className="absolute top-5 left-5 flex h-20 rounded-[4px] bg-white font-[Roboto,sans-serif] text-[36px] shadow-[0_2px_8px_rgba(0,0,0,.3)]">
          <span className="flex w-[139px] items-center justify-center rounded-l-[4px] border-r-2 border-[#ebebeb] pt-0.5 font-medium text-black">Map</span>
          <span className="flex w-[197px] items-center justify-center pt-0.5 text-[#565656]">Satellite</span>
        </div>
        <div className="absolute top-[124px] left-[18px] size-10 rounded-full bg-linear-135 from-[#825ee4] to-[#5e72e4]" />
        <div className="absolute top-5 right-5 flex size-20 items-center justify-center rounded-[4px] bg-white shadow-[0_2px_8px_rgba(0,0,0,.3)]">
          <svg viewBox="0 0 18 18" className="size-9" fill="#666">
            <path d="M0 0v6h2V2h4V0H0zm16 0h-4v2h4v4h2V0h-2zm0 16h-4v2h6v-6h-2v4zM2 12H0v6h6v-2H2v-4z" />
          </svg>
        </div>
      </div>
    </section>
  );
}

/* ---------- page ---------- */

export default function App() {
  return (
    <div className="relative flex h-[1448px] w-full overflow-hidden bg-[linear-gradient(#5f75e4_584px,#f8f9fb_584px)] font-['Liberation_Sans',Arial,sans-serif]">
      <Sidebar />
      <main className="ml-12 w-[2206px] shrink-0">
        <header className="flex h-[182px] justify-between pt-4 pr-16 pl-8 text-white">
          <div>
            <p className="pt-px text-[28px] leading-10">
              <span className="opacity-50">Home</span>
              <span className="mx-[14px]">/</span>
              <span>Geolocalización de II.EE</span>
            </p>
            <h1 className="mt-[5px] text-[32px] leading-[42px] font-bold">DIRECCIÓN DE SERVICIOS EDUCATIVOS EN EL ÁMBITO RURAL - DISER</h1>
          </div>
          <FaCog className="mt-[29px] size-7" />
        </header>
        <div className="grid grid-cols-4 gap-12">
          {cards.map((c) => (
            <StatCard key={c.name} card={c} />
          ))}
          <Filters />
          <MapCard />
        </div>
      </main>
      <div className="pointer-events-none absolute top-[1460px] left-[160px] h-20 w-[2600px] rounded-3xl shadow-[0_0_80px_rgba(0,0,0,.32)]" />
      <div className="pointer-events-none absolute top-0 left-[2832px] h-full w-20 shadow-[0_0_48px_rgba(60,70,90,.12)]" />
      <button className="absolute right-[47px] bottom-12 flex size-[104px] items-center justify-center rounded-full bg-white text-[#344767] shadow-[0_4px_24px_rgba(0,0,0,.16)]">
        <FaCog className="size-10" />
      </button>
    </div>
  );
}
